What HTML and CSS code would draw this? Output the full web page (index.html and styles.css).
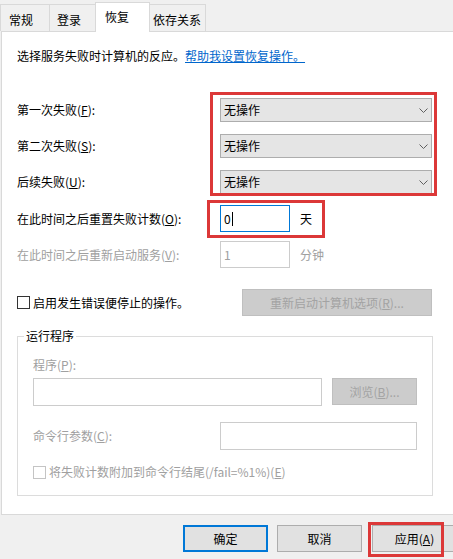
FILE: index.html
```html
<!DOCTYPE html>
<html lang="zh-CN">
<head>
<meta charset="utf-8">
<title>恢复</title>
<link rel="stylesheet" href="styles.css">
</head>
<body>
<div class="tabs">
  <div class="tab t1">常规</div>
  <div class="tab t2">登录</div>
  <div class="tab active">恢复</div>
  <div class="tab t4">依存关系</div>
</div>
<div class="panel">
  <p class="intro">选择服务失败时计算机的反应。<a href="#">帮助我设置恢复操作。</a></p>

  <div class="row combo-row first">
    <label>第一次失败(<u>F</u>):</label>
    <div class="combo"><span>无操作</span><svg width="9" height="5" viewBox="0 0 9 5"><path d="M0.5 0.5 L4.5 4.5 L8.5 0.5" fill="none" stroke="#606060"/></svg></div>
  </div>
  <div class="row combo-row">
    <label>第二次失败(<u>S</u>):</label>
    <div class="combo"><span>无操作</span><svg width="9" height="5" viewBox="0 0 9 5"><path d="M0.5 0.5 L4.5 4.5 L8.5 0.5" fill="none" stroke="#606060"/></svg></div>
  </div>
  <div class="row combo-row">
    <label>后续失败(<u>U</u>):</label>
    <div class="combo"><span>无操作</span><svg width="9" height="5" viewBox="0 0 9 5"><path d="M0.5 0.5 L4.5 4.5 L8.5 0.5" fill="none" stroke="#606060"/></svg></div>
  </div>

  <div class="row input-row reset">
    <label>在此时间之后重置失败计数(<u>O</u>):</label>
    <div class="field"><div class="input focus">0<span class="caret"></span></div><span class="unit">天</span></div>
  </div>
  <div class="row input-row restart disabled">
    <label>在此时间之后重新启动服务(<u>V</u>):</label>
    <div class="field"><div class="input dis">1</div><span class="unit">分钟</span></div>
  </div>

  <div class="check-row">
    <div class="check"><span class="box"></span>启用发生错误便停止的操作。</div>
    <button class="btn disabled wide">重新启动计算机选项(<u>R</u>)...</button>
  </div>

  <fieldset class="group">
    <legend>运行程序</legend>
    <div class="glabel">程序(<u>P</u>):</div>
    <div class="prog-row">
      <div class="input dis long"></div>
      <button class="btn disabled browse">浏览(<u>B</u>)...</button>
    </div>
    <div class="cmd-row">
      <label>命令行参数(<u>C</u>):</label>
      <div class="input dis cmd"></div>
    </div>
    <div class="check dis gcheck"><span class="box"></span>将失败计数附加到命令行结尾(/fail=%1%)(<u>E</u>)</div>
  </fieldset>
</div>
<div class="footer">
  <button class="btn ok">确定</button>
  <button class="btn">取消</button>
  <button class="btn apply">应用(<u>A</u>)</button>
</div>

<div class="mark m-tab"></div>
<div class="mark m-combo"></div>
<div class="mark m-reset"></div>
<div class="mark m-apply"></div>
</body>
</html>
```
FILE: styles.css
```css
html, body {
  margin: 0;
  overflow: hidden;
}
body {
  width: 453px;
  height: 559px;
  position: relative;
  background: #f0f0f0;
  color: #000;
  font: 12px/16px "Noto Sans CJK SC", "Noto Sans", sans-serif;
}
u { text-decoration: underline; }

.tabs {
  display: flex;
  align-items: flex-end;
  height: 31px;
}
.tab {
  box-sizing: border-box;
  height: 27px;
  line-height: 25px;
  padding-top: 2px;
  border: 1px solid #d9d9d9;
  border-bottom: none;
  background: #f0f0f0;
  margin-right: -1px;
  white-space: nowrap;
}
.t1 { width: 50px; padding-left: 8px; }
.t2 { width: 47px; padding-left: 7px; }
.t4 { width: 57px; padding-left: 3px; }
.tab.active {
  width: 55px;
  height: 30px;
  padding-left: 9px;
  padding-top: 1px;
  background: #fff;
  margin-bottom: -1px;
  position: relative;
  z-index: 1;
}

.panel {
  box-sizing: border-box;
  height: 484px;
  margin-left: 1px;
  border: 1px solid #d9d9d9;
  border-right: none;
  background: #fff;
  padding: 16px 0 0 15px;
}
.intro { margin: 0; }
.intro a { color: #0066cc; text-decoration: underline; }

.row {
  display: grid;
  grid-template-columns: 203px 212px;
  align-items: center;
}
.combo-row { height: 24px; margin-top: 12px; }
.combo-row.first { margin-top: 34px; }
.combo {
  box-sizing: border-box;
  height: 24px;
  border: 1px solid #adadad;
  background: #e5e5e5;
  display: flex;
  align-items: center;
  justify-content: space-between;
  padding: 0 3px 0 3px;
}

.input-row { height: 27px; }
.reset { margin-top: 11px; }
.restart { margin-top: 9px; }
.disabled label, .disabled .unit { color: #a0a0a0; }
.field {
  display: flex;
  align-items: center;
  gap: 10px;
}
.input {
  box-sizing: border-box;
  height: 27px;
  width: 70px;
  border: 1px solid #7a7a7a;
  background: #fff;
  padding: 0 3px;
  line-height: 25px;
  display: flex;
  align-items: center;
}
.input.focus { border-color: #0078d7; }
.input.dis { border-color: #cccccc; color: #a0a0a0; }
.caret {
  display: inline-block;
  width: 1px;
  height: 14px;
  background: #000;
  margin-left: 1px;
}

.check-row {
  margin-top: 21px;
  height: 27px;
  width: 415px;
  display: flex;
  align-items: center;
  justify-content: space-between;
}
.check {
  display: flex;
  align-items: center;
  white-space: nowrap;
}
.box {
  box-sizing: border-box;
  width: 13px;
  height: 13px;
  border: 1px solid #333;
  background: #fff;
  margin-right: 3px;
}
.check.dis { color: #a0a0a0; }
.check.dis .box { border-color: #c4c4c4; }

.btn {
  box-sizing: border-box;
  height: 27px;
  width: 85px;
  padding: 0;
  border: 1px solid #adadad;
  background: #e1e1e1;
  color: #000;
  font: inherit;
  white-space: nowrap;
}
.btn.disabled {
  background: #cccccc;
  border-color: #bfbfbf;
  color: #a3a3a3;
}
.btn.wide { width: 190px; }

.group {
  box-sizing: border-box;
  width: 416px;
  min-width: 0;
  margin: 12px 0 0;
  padding: 0 15px 15px;
  border: 1px solid #dcdcdc;
}
.group legend {
  padding: 0 2px;
  margin-left: -9px;
  line-height: 16px;
}
.glabel { margin-top: 13px; color: #a0a0a0; }
.prog-row {
  margin-top: 5px;
  display: flex;
  gap: 10px;
  align-items: flex-start;
}
.input.long { width: 289px; height: 28px; }
.prog-row .btn { width: 85px; }
.cmd-row {
  margin-top: 16px;
  display: grid;
  grid-template-columns: 187px 197px;
  align-items: center;
  height: 28px;
}
.cmd-row label { color: #a0a0a0; }
.input.cmd { width: 197px; height: 28px; }
.gcheck { margin-top: 14px; }

.footer {
  box-sizing: border-box;
  height: 44px;
  padding: 10px 0 0 183px;
  display: flex;
  align-items: flex-start;
  gap: 9px;
  overflow: hidden;
}
.footer .btn { flex: none; }
.btn.ok { border: 2px solid #0078d7; }
.btn.apply { margin-left: 1px; }

.mark {
  position: absolute;
  box-sizing: border-box;
  border: 3px solid #dc3838;
  pointer-events: none;
}
.m-tab { left: 95px; top: 2px; width: 55px; height: 30px; }
.m-combo { left: 210px; top: 92px; width: 227px; height: 104px; }
.m-reset { left: 207px; top: 200px; width: 118px; height: 38px; }
.m-apply { left: 368px; top: 522px; width: 76px; height: 35px; }
```
